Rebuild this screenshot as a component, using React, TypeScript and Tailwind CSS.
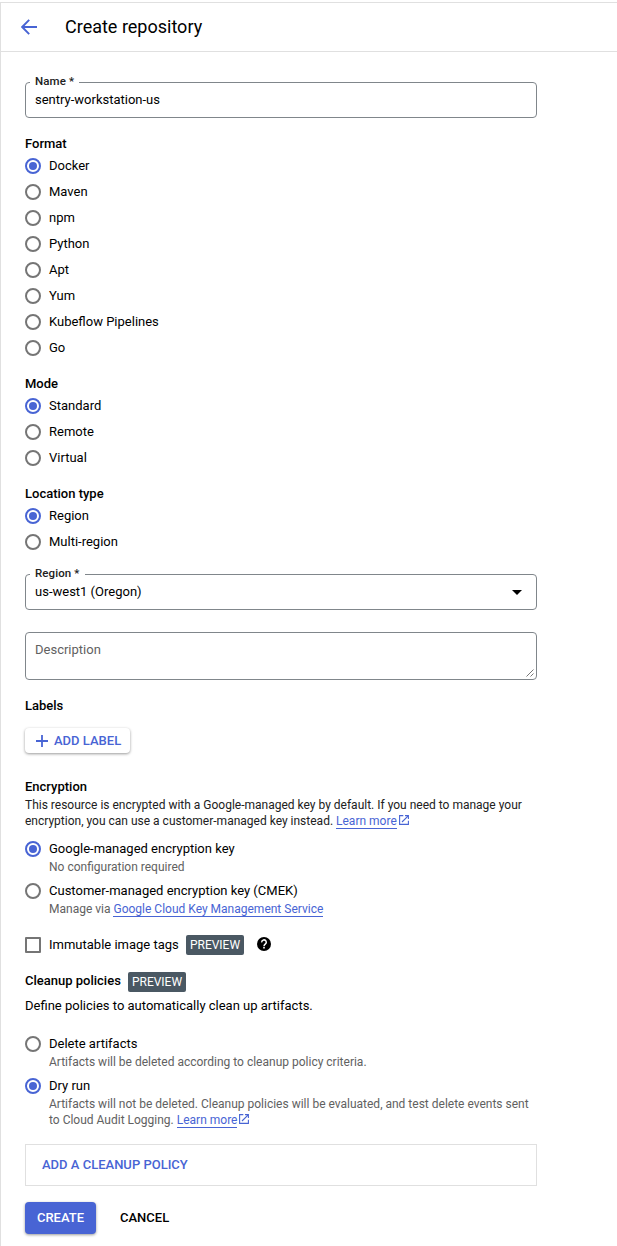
import type { ReactNode } from "react";

function Radio({ checked = false }: { checked?: boolean }) {
  return (
    <span
      className={
        checked
          ? "flex size-4 shrink-0 items-center justify-center rounded-full border-2 border-[#4864d4]"
          : "flex size-4 shrink-0 items-center justify-center rounded-full border-2 border-[#757575]"
      }
    >
      {checked && <span className="size-2 rounded-full bg-[#4864d4]" />}
    </span>
  );
}

function RadioGroup({ title, options }: { title: string; options: string[] }) {
  return (
    <section>
      <h2 className="h-5 leading-[22px] font-medium">{title}</h2>
      {options.map((option, i) => (
        <label key={option} className="flex h-[26px] items-center gap-2">
          <Radio checked={i === 0} />
          <span>{option}</span>
        </label>
      ))}
    </section>
  );
}

function DetailRadio({ title, checked, children }: { title: string; checked?: boolean; children: ReactNode }) {
  return (
    <label className="flex items-start gap-2">
      <span className="pt-0.5">
        <Radio checked={checked} />
      </span>
      <span className="flex flex-col">
        <span className="leading-5">{title}</span>
        <span className="text-xs leading-4 text-[#616161]">{children}</span>
      </span>
    </label>
  );
}

function OutlinedField({ label, value, children }: { label: string; value: string; children?: ReactNode }) {
  return (
    <fieldset className="-mt-2 h-11 w-[512px] rounded border border-[#80868b] pr-[14px] pl-[9px]">
      <legend className="-ml-[5px] h-4 px-[5px] text-[11.5px] leading-[14px] font-medium tracking-[0.1px] text-[#212121]">
        {label}
      </legend>
      <div className="flex h-5 items-center">
        <span className="flex-1">{value}</span>
        {children}
      </div>
    </fieldset>
  );
}

function Link({ children }: { children: ReactNode }) {
  return <a className="border-b border-[#4864d4] text-[#4864d4]">{children}</a>;
}

function ExternalIcon() {
  return (
    <svg viewBox="0 0 10 10" className="ml-0.5 inline-block size-[10px] align-[0px]" fill="none" stroke="#4864d4" strokeWidth="1.1">
      <path d="M4.3.6H.6v8.8h8.8V5.7M6 .6h3.4V4M9.2.8 3 7" />
    </svg>
  );
}

function PreviewBadge() {
  return (
    <span className="flex h-5 w-[58px] items-center justify-center rounded-[2px] bg-[#4a5863] text-xs leading-5 text-white">
      PREVIEW
    </span>
  );
}

export default function App() {
  return (
    <div className="h-[1246px] overflow-hidden bg-white pt-0.5 font-['Roboto',sans-serif] text-[13px] leading-5 text-black">
      <div className="h-full border-t border-l border-[#e0e0e0]">
        <header className="flex h-[49px] items-center border-b border-[#e0e0e0] pl-5">
          <svg viewBox="0 0 16 16" className="size-4" fill="none" stroke="#4864d4" strokeWidth="1.9">
            <path d="M16 8H1.5M8.2.9 1.2 8l7 7.1" />
          </svg>
          <h1 className="ml-7 text-lg leading-6">Create repository</h1>
        </header>

        <main className="flex w-[536px] flex-col pt-[30px] pl-6">
          <OutlinedField label="Name *" value="sentry-workstation-us" />

          <div className="mt-[15px] flex flex-col gap-3">
            <RadioGroup
              title="Format"
              options={["Docker", "Maven", "npm", "Python", "Apt", "Yum", "Kubeflow Pipelines", "Go"]}
            />
            <RadioGroup title="Mode" options={["Standard", "Remote", "Virtual"]} />
            <RadioGroup title="Location type" options={["Region", "Multi-region"]} />
          </div>

          <div className="mt-[19px]">
            <OutlinedField label="Region *" value="us-west1 (Oregon)">
              <svg viewBox="0 0 10 5" className="h-[5px] w-[10px]">
                <path d="M0 0h10L5 5z" />
              </svg>
            </OutlinedField>
          </div>

          <div className="mt-[22px] flex h-12 w-[512px] justify-between rounded border border-[#80868b] pt-[7px] pl-[9px] text-[#616161]">
            <span>Description</span>
            <svg viewBox="0 0 8 8" className="mr-0.5 mb-0.5 size-2 self-end" stroke="#555" strokeWidth="0.8">
              <path d="M.5 7.5l7-7M4.5 7.5l3-3" />
            </svg>
          </div>

          <h2 className="mt-[15px] h-5 leading-[22px] font-medium">Labels</h2>
          <button className="mt-[13px] flex h-[25px] w-[105px] items-center rounded-sm bg-white pl-[11px] font-medium text-[#4864d4] shadow-[0_1px_3px_rgba(0,0,0,0.4)]">
            <svg viewBox="0 0 12 12" className="mr-[6px] size-3" stroke="currentColor" strokeWidth="1.8">
              <path d="M6 0v12M0 6h12" />
            </svg>
            ADD LABEL
          </button>

          <h2 className="mt-6 h-5 font-medium">Encryption</h2>
          <p className="text-xs leading-4 whitespace-nowrap text-[#212121]">
            This resource is encrypted with a Google-managed key by default. If you need to manage your
            <br />
            encryption, you can use a customer-managed key instead. <Link>Learn more</Link>
            <ExternalIcon />
          </p>
          <div className="mt-[10px] flex flex-col gap-1.5">
            <DetailRadio title="Google-managed encryption key" checked>
              No configuration required
            </DetailRadio>
            <DetailRadio title="Customer-managed encryption key (CMEK)">
              Manage via <Link>Google Cloud Key Management Service</Link>
            </DetailRadio>
          </div>

          <div className="mt-[18px] flex h-5 items-center">
            <span className="size-4 rounded-[1px] border-2 border-[#757575]" />
            <span className="ml-2 w-[137px]">Immutable image tags</span>
            <PreviewBadge />
            <svg viewBox="0 0 14 14" className="ml-[13px] size-[14px] -translate-y-px">
              <circle cx="7" cy="7" r="7" />
              <path d="M4.7 5.4a2.3 2.3 0 1 1 3.6 1.7C7.5 7.7 7 8 7 9.2" fill="none" stroke="#fff" strokeWidth="1.5" />
              <path d="M6.2 10h1.6v1.5H6.2z" fill="#fff" />
            </svg>
          </div>

          <div className="mt-[17px] flex h-5">
            <h2 className="w-[103px] leading-[18px] font-medium">Cleanup policies</h2>
            <PreviewBadge />
          </div>
          <p className="mt-1">Define policies to automatically clean up artifacts.</p>

          <div className="mt-[18px] flex flex-col gap-1.5">
            <DetailRadio title="Delete artifacts">
              Artifacts will be deleted according to cleanup policy criteria.
            </DetailRadio>
            <DetailRadio title="Dry run" checked>
              <span className="whitespace-nowrap">
                Artifacts will not be deleted. Cleanup policies will be evaluated, and test delete events sent
                <br />
                to Cloud Audit Logging. <Link>Learn more</Link>
                <ExternalIcon />
              </span>
            </DetailRadio>
          </div>

          <div className="mt-4 flex h-[42px] w-[512px] items-center border border-[#e0e0e0] pl-4">
            <button className="font-medium text-[#4864d4]">ADD A CLEANUP POLICY</button>
          </div>

          <div className="mt-4 flex h-8 items-center">
            <button className="h-8 w-[71px] rounded-sm bg-[#4864d4] font-medium text-white shadow-[0_1px_3px_rgba(0,0,0,0.4)]">
              CREATE
            </button>
            <button className="ml-6 font-medium">CANCEL</button>
          </div>
        </main>
      </div>
    </div>
  );
}
